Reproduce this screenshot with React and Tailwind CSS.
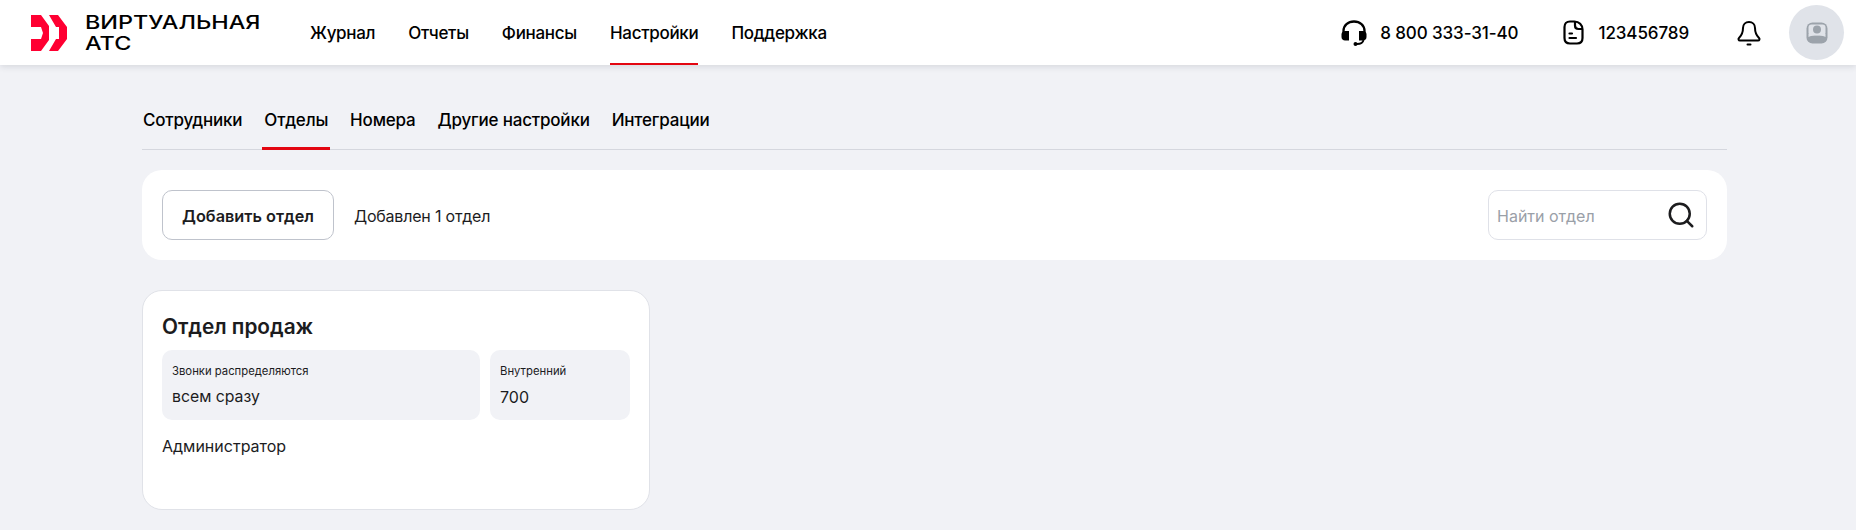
import { Search } from 'lucide-react';

const Logo = () => (
  <svg width="36" height="36" viewBox="0 0 36 36" className="shrink-0">
    <path d="M0 0H10L18 11V25L10 36H0V24H10L12 18L10 12H0Z" fill="#ff0032" />
    <path d="M18 0H27L36 12V24L27 36H18L25 24H28V12H25Z" fill="#ff0032" />
  </svg>
);

const Headset = () => (
  <svg width="26" height="26" viewBox="0 0 26 26" fill="none">
    <path d="M2.500 13V11C2.500 5.500 7 1.500 13 1.500S23.500 5.500 23.500 11V13" stroke="#000" strokeWidth="2.300" />
    <path d="M4 11H8V20.500H4C2 20.500 0.500 19 0.500 17V14.500C0.500 12.500 2 11 4 11Z" fill="#000" />
    <path d="M22 11H18V20.500H22C24 20.500 25.500 19 25.500 17V14.500C25.500 12.500 24 11 22 11Z" fill="#000" />
    <path d="M22.500 20C22 22.800 19.500 24 16 24" stroke="#000" strokeWidth="1.800" />
    <circle cx="14.500" cy="24" r="2" fill="#000" />
  </svg>
);

const Contract = () => (
  <svg width="21" height="25" viewBox="0 0 21 25" fill="none" stroke="#000" strokeWidth="2.200" strokeLinecap="round" strokeLinejoin="round">
    <path d="M11.500 1.500H7C3.500 1.500 1.500 3.500 1.500 7V18C1.500 21.500 3.500 23.500 7 23.500H14C17.500 23.500 19.500 21.500 19.500 18V9.500C19.500 5 16 1.500 11.500 1.500Z" />
    <path d="M12 2V5.500C12 7.500 13.500 9 15.500 9H19" />
    <path d="M6.500 13.500H9M6.500 18H13" />
  </svg>
);

const BellIcon = () => (
  <svg width="24" height="26" viewBox="0 0 24 26" fill="none" stroke="#000" strokeWidth="2" strokeLinecap="round" strokeLinejoin="round">
    <path d="M6 8C6 4.500 8.500 2 12 2S18 4.500 18 8C18 12 19 15 22 18C23 19 22.500 20.500 21 20.500H3C1.500 20.500 1 19 2 18C5 15 6 12 6 8Z" />
    <path d="M10.500 24.500H13.500" />
  </svg>
);

const Avatar = () => (
  <svg width="22" height="22" viewBox="0 0 22 22">
    <rect x="0.500" y="0.500" width="21" height="21" rx="6" fill="#9ca3ab" />
    <rect x="2.500" y="2.500" width="17" height="11" rx="3" fill="#e0e3e9" />
    <path d="M2.500 15C6 12.500 16 12.500 19.500 15V12H2.500Z" fill="#e0e3e9" />
    <circle cx="11" cy="7.500" r="4" fill="#9ca3ab" />
  </svg>
);

const NavItem = ({ children, active }) => (
  <a className={`flex h-[65px] items-center text-[17px] font-medium tracking-[-0.3px] text-black ${active ? 'border-b-2 border-[#e30611] pt-[5px]' : 'pt-[3px]'}`}>
    {children}
  </a>
);

const Tab = ({ children, active }) => (
  <a className={`h-[53px] px-[2px] pt-[11px] text-[17px] font-medium leading-[24px] tracking-[-0.2px] text-black ${active ? 'border-b-[3px] border-[#e30611]' : ''}`}>
    {children}
  </a>
);

export default function App() {
  return (
    <div className="h-[530px] overflow-hidden bg-[#f1f2f6] font-['Inter',sans-serif] text-[#1c1c1e]">
      {/* Header */}
      <header className="relative flex h-[65px] items-center bg-white pl-[31px] pr-[12px] shadow-[0_2px_6px_rgba(30,40,60,0.12)]">
        <Logo />
        <div className="ml-[18px] w-[140px] origin-left scale-x-[1.3] text-[18px] font-medium leading-[21px] text-black">
          ВИРТУАЛЬНАЯ АТС
        </div>
        <nav className="ml-[85px] flex gap-[33px]">
          <NavItem>Журнал</NavItem>
          <NavItem>Отчеты</NavItem>
          <NavItem>Финансы</NavItem>
          <NavItem active>Настройки</NavItem>
          <NavItem>Поддержка</NavItem>
        </nav>
        <div className="ml-auto flex items-center">
          <Headset />
          <span className="ml-[13px] pt-[2px] text-[17px] font-medium tracking-[-0.1px] text-black">8 800 333-31-40</span>
          <div className="ml-[45px]"><Contract /></div>
          <span className="ml-[14px] pt-[2px] text-[17px] font-medium tracking-[-0.1px] text-black">123456789</span>
          <div className="ml-[48px]"><BellIcon /></div>
          <div className="ml-[28px] flex h-[55px] w-[55px] items-center justify-center rounded-full bg-[#e0e3e9]">
            <Avatar />
          </div>
        </div>
      </header>

      <main className="mx-[142px] w-[1585px]">
        {/* Tabs */}
        <div className="mt-[32px] h-[53px] border-b border-[#d5d7de]">
          <div className="-ml-[1px] flex items-start gap-[18px]">
            <Tab>Сотрудники</Tab>
            <Tab active>Отделы</Tab>
            <Tab>Номера</Tab>
            <Tab>Другие настройки</Tab>
            <Tab>Интеграции</Tab>
          </div>
        </div>

        {/* Toolbar */}
        <section className="mt-[20px] flex h-[90px] items-center rounded-[20px] bg-white px-[20px]">
          <button className="h-[50px] w-[172px] rounded-[10px] border border-[#bfc3cc] pt-[2px] text-[16.3px] font-semibold text-[#1c1c1e]">
            Добавить отдел
          </button>
          <span className="ml-[20px] pt-[2px] text-[16px] tracking-[-0.2px] text-[#1c1c1e]">Добавлен 1 отдел</span>
          <div className="ml-auto flex h-[50px] w-[219px] items-center justify-between rounded-[10px] border border-[#dfe1e8] pl-[8px] pr-[10px]">
            <span className="pt-[2px] text-[16px] text-[#9aa0a8]">Найти отдел</span>
            <Search size={30} strokeWidth={2} color="#1c1c1e" />
          </div>
        </section>

        {/* Department card */}
        <section className="mt-[30px] h-[220px] w-[508px] rounded-[20px] border border-[#e0e2e8] bg-white px-[19px] pt-[21px]">
          <h2 className="text-[20.8px] font-semibold leading-[30px] text-[#1c1c1e]">Отдел продаж</h2>
          <div className="mt-[8px] flex gap-[10px]">
            <div className="h-[70px] w-[318px] rounded-[10px] bg-[#f1f2f6] px-[10px] pt-[13px]">
              <div className="text-[11.3px] leading-[16px]">Звонки распределяются</div>
              <div className="mt-[6px] text-[15.8px] leading-[24px]">всем сразу</div>
            </div>
            <div className="h-[70px] w-[140px] rounded-[10px] bg-[#f1f2f6] px-[10px] pt-[13px]">
              <div className="text-[11.3px] leading-[16px]">Внутренний</div>
              <div className="mt-[6px] text-[16px] leading-[24px]">700</div>
            </div>
          </div>
          <div className="mt-[14px] text-[16px] leading-[24px]">Администратор</div>
        </section>
      </main>
    </div>
  );
}
